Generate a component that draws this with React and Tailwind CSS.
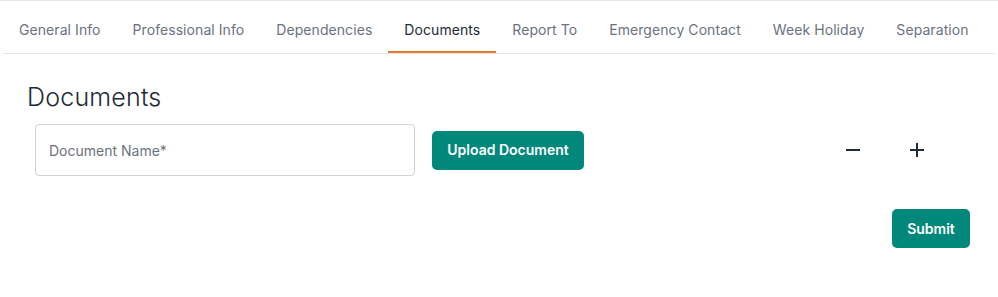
import { useState } from 'react';

const tabs = [
  'General Info',
  'Professional Info',
  'Dependencies',
  'Documents',
  'Report To',
  'Emergency Contact',
  'Week Holiday',
  'Separation',
];

export default function App() {
  const [active, setActive] = useState('Documents');
  const [docName, setDocName] = useState('');

  return (
    <div className="w-[998px] h-[297px] bg-white border-t border-gray-200 font-['Inter',sans-serif] overflow-hidden">
      <div className="mx-[3px] h-[53px] flex border-b border-gray-200">
        {tabs.map((t) => (
          <button
            key={t}
            onClick={() => setActive(t)}
            className={
              t === active
                ? 'h-full px-4 pt-[7px] flex items-center text-sm tracking-[0.07px] text-[#1f2937] border-b-2 border-[#e8792a]'
                : 'h-full px-4 pt-[7px] flex items-center text-sm tracking-[0.07px] text-[#6b7280] border-b-2 border-transparent'
            }
          >
            {t}
          </button>
        ))}
      </div>

      <div className="pl-[26px] pt-[26px]">
        <h2 className="pl-px pt-px text-[25px] leading-8 tracking-[0.2px] font-light text-[#1f2937]">Documents</h2>

        <div className="mt-[11px] pl-[9px] flex items-center">
          <input
            value={docName}
            onChange={(e) => setDocName(e.target.value)}
            placeholder="Document Name*"
            className="w-[380px] h-[52px] px-[13px] border border-[#cfd2d6] rounded text-sm text-gray-800 placeholder:text-[#6b7280] outline-none"
          />
          <button className="ml-[17px] w-[152px] h-[39px] rounded-[5px] bg-[#02887a] text-white text-sm font-semibold">
            Upload Document
          </button>
          <button className="ml-[249px] w-10 h-10 flex items-center justify-center text-[#1f2937]">
            <svg width="16" height="16" viewBox="0 0 16 16" fill="none" stroke="currentColor" strokeWidth="2">
              <path d="M1 8h14" />
            </svg>
          </button>
          <button className="ml-6 w-10 h-10 flex items-center justify-center text-[#1f2937]">
            <svg width="16" height="16" viewBox="0 0 16 16" fill="none" stroke="currentColor" strokeWidth="2">
              <path d="M1 8h14M8 1v14" />
            </svg>
          </button>
        </div>

        <div className="mt-[33px] pr-[28px] flex justify-end">
          <button className="w-[78px] h-[39px] rounded-[5px] bg-[#02887a] text-white text-sm font-semibold">
            Submit
          </button>
        </div>
      </div>
    </div>
  );
}
